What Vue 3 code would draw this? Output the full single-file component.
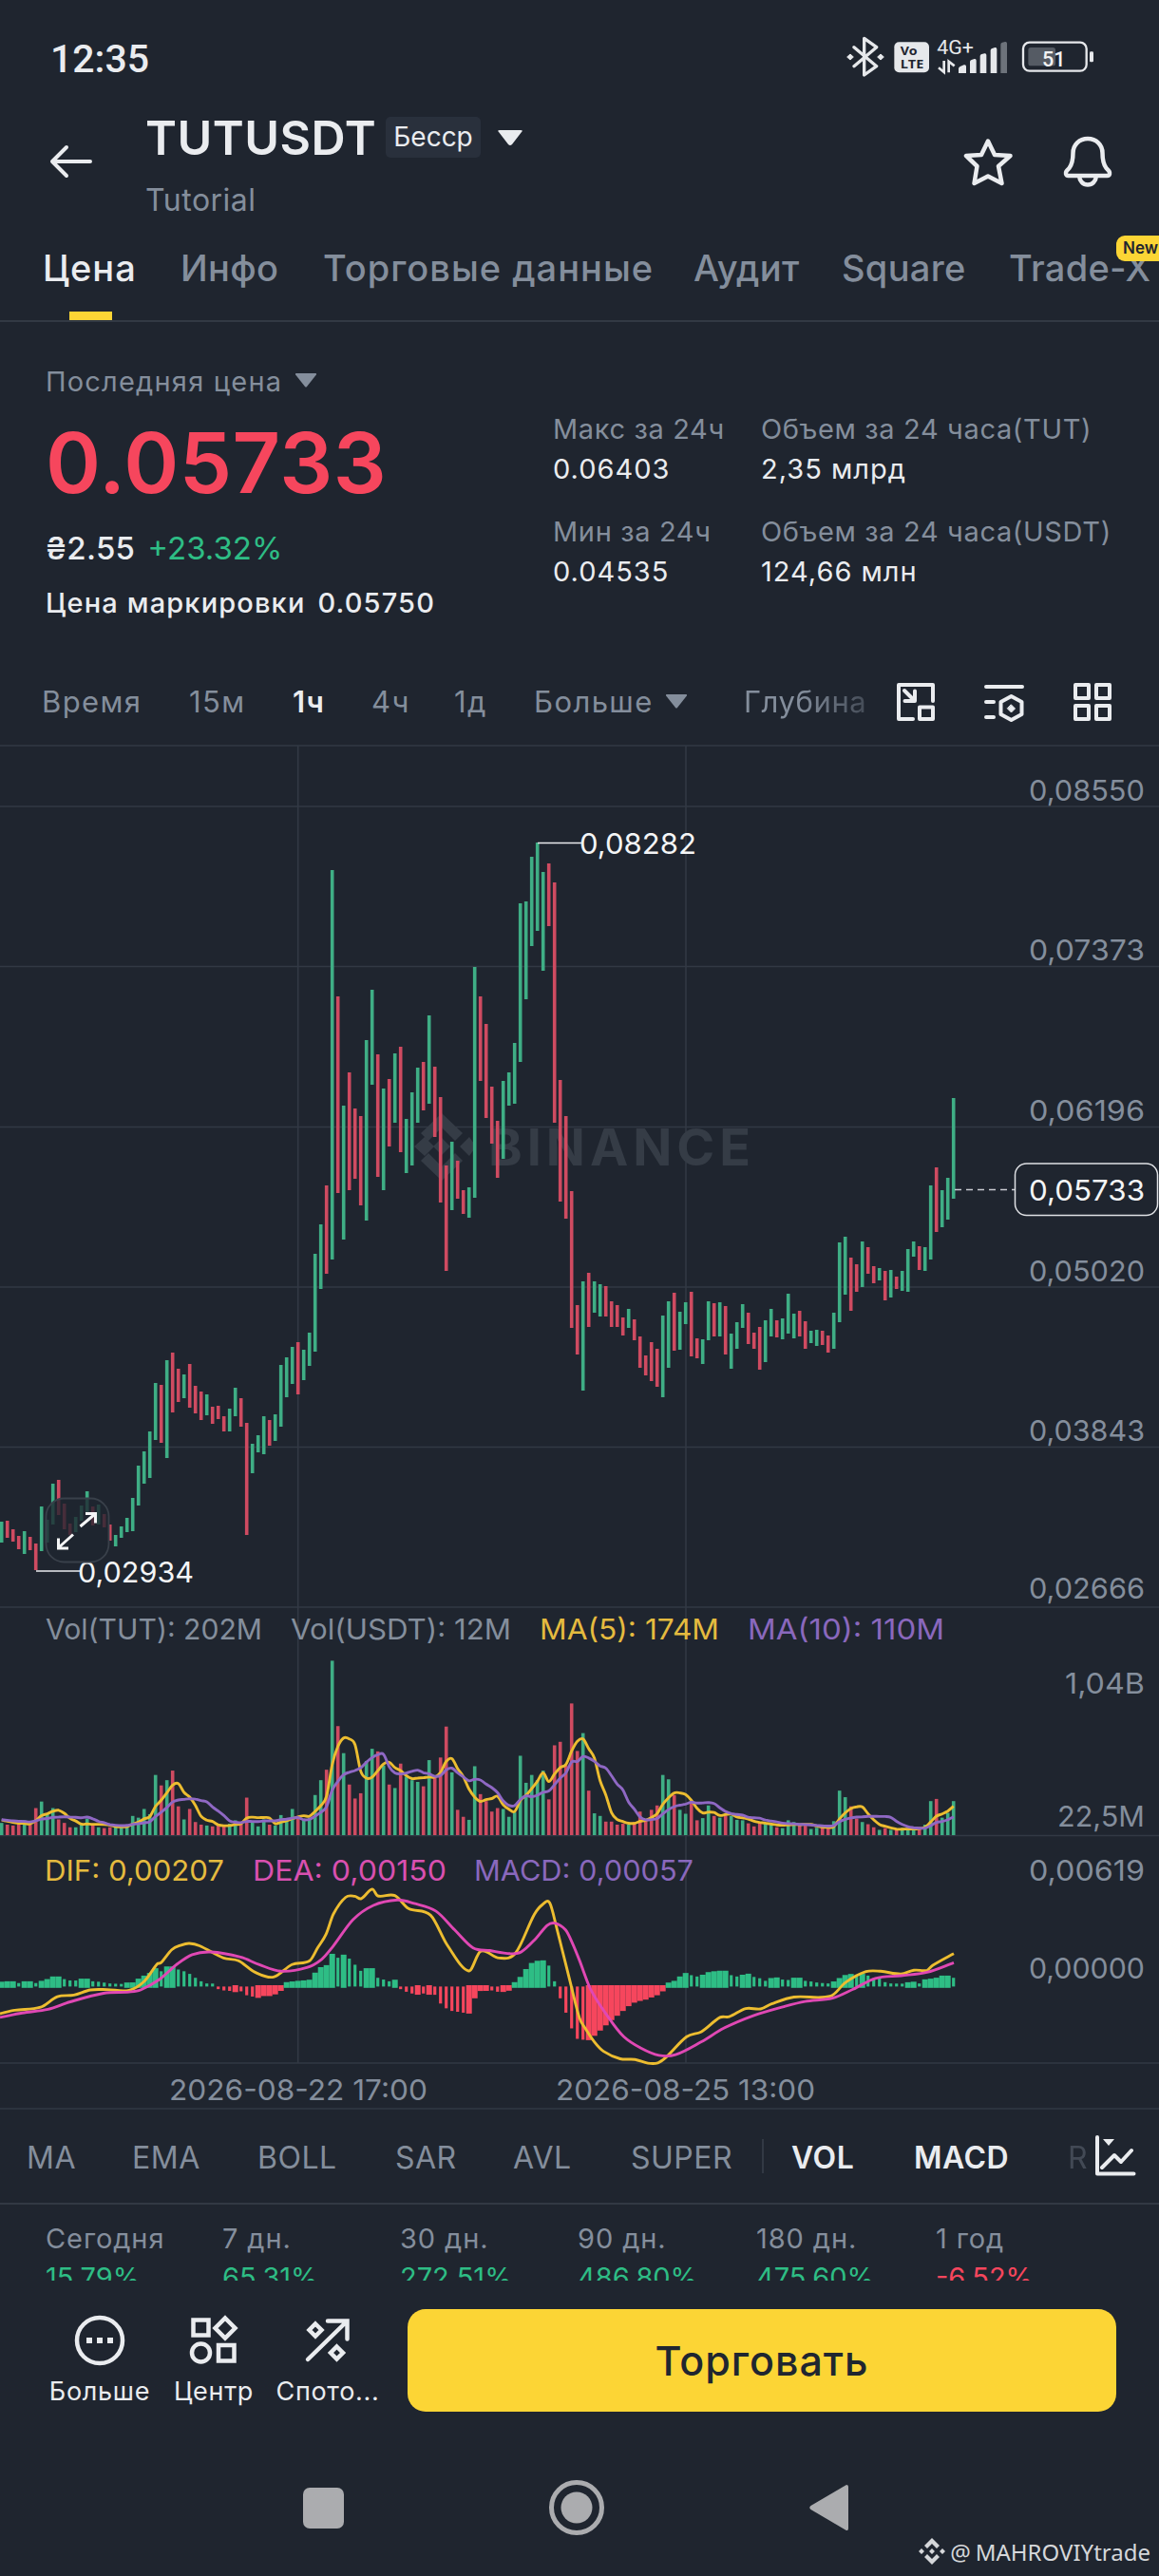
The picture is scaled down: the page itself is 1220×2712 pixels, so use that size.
<script setup>
import { ref, computed } from 'vue'

const tabs = ref(['Цена', 'Инфо', 'Торговые данные', 'Аудит', 'Square', 'Trade-X'])
const activeTab = ref('Цена')

const intervals = ref(['Время', '15м', '1ч', '4ч', '1д'])
const activeInterval = ref('1ч')

const stats = ref([
  { label: 'Макс за 24ч', value: '0.06403' },
  { label: 'Объем за 24 часа(TUT)', value: '2,35 млрд' },
  { label: 'Мин за 24ч', value: '0.04535' },
  { label: 'Объем за 24 часа(USDT)', value: '124,66 млн' },
])

const indicators = ref(['MA', 'EMA', 'BOLL', 'SAR', 'AVL', 'SUPER'])

const periods = ref([
  { label: 'Сегодня', value: '15.79%' },
  { label: '7 дн.', value: '65.31%' },
  { label: '30 дн.', value: '272.51%' },
  { label: '90 дн.', value: '486.80%' },
  { label: '180 дн.', value: '475.60%' },
  { label: '1 год', value: '-6.52%' },
])

// Chart geometry
const STEP = 6
const VOL_BASE = 1932
const MACD_ZERO = 2091.4
const SCALE = 0.918
const xAt = (i) => 1.7 + i * STEP

const gridRows = [849, 1017.5, 1186.5, 1355, 1523.5, 1692, 1932.5, 2172]
const gridCols = [313.7, 722]

const axis = [
  { y: 842.5, text: '0,08550', w: 120 },
  { y: 1011, text: '0,07373', w: 120 },
  { y: 1179.5, text: '0,06196', w: 120 },
  { y: 1348.5, text: '0,05020', w: 120 },
  { y: 1517, text: '0,03843', w: 120 },
  { y: 1683, text: '0,02666', w: 120 },
  { y: 1782.5, text: '1,04B', w: 82 },
  { y: 1923, text: '22,5M', w: 90 },
  { y: 1980, text: '0,00619', w: 120 },
  { y: 2082.5, text: '0,00000', w: 120 },
]

const legends = [
  { x: 48, y: 1725.5, w: 228, text: 'Vol(TUT): 202M', cls: 'grey' },
  { x: 306, y: 1725.5, w: 232, text: 'Vol(USDT): 12M', cls: 'grey' },
  { x: 568, y: 1725.5, w: 189, text: 'MA(5): 174M', cls: 'gold' },
  { x: 787, y: 1725.5, w: 207, text: 'MA(10): 110M', cls: 'purple' },
  { x: 47, y: 1980, w: 189, text: 'DIF: 0,00207', cls: 'gold' },
  { x: 266, y: 1980, w: 204, text: 'DEA: 0,00150', cls: 'pink' },
  { x: 499, y: 1980, w: 231, text: 'MACD: 0,00057', cls: 'purple' },
  { x: 178, y: 2211, w: 272, text: '2026-08-22 17:00', cls: 'grey' },
  { x: 585, y: 2211, w: 273, text: '2026-08-25 13:00', cls: 'grey' },
]

// [top, bottom, up]
const candles = [
  [1602, 1624, 1], [1601, 1619, 0], [1610, 1623, 0], [1617, 1631, 0], [1612, 1636, 1], [1618, 1632, 0],
  [1625, 1653, 0], [1586, 1633, 1], [1600, 1624, 1], [1562, 1605, 1], [1558, 1595, 0], [1583, 1610, 0],
  [1604, 1616, 0], [1597, 1613, 1], [1585, 1601, 1], [1570, 1595, 1], [1586, 1606, 0], [1584, 1605, 1],
  [1594, 1608, 0], [1605, 1622, 0], [1616, 1628, 1], [1607, 1619, 1], [1598, 1613, 1], [1577, 1612, 1],
  [1543, 1585, 1], [1528, 1562, 1], [1507, 1556, 1], [1456, 1516, 1], [1458, 1519, 0], [1432, 1535, 1],
  [1424, 1487, 0], [1441, 1476, 0], [1447, 1472, 1], [1436, 1482, 0], [1459, 1488, 0], [1465, 1495, 0],
  [1468, 1490, 1], [1481, 1499, 0], [1480, 1494, 0], [1491, 1507, 0], [1483, 1507, 1], [1461, 1491, 1],
  [1472, 1502, 0], [1498, 1616, 0], [1520, 1551, 1], [1511, 1529, 1], [1491, 1531, 1], [1495, 1522, 0],
  [1489, 1517, 1], [1437, 1502, 1], [1429, 1471, 1], [1418, 1457, 1], [1413, 1468, 0], [1421, 1453, 1],
  [1403, 1438, 1], [1320, 1423, 1], [1289, 1357, 1], [1248, 1341, 0], [916, 1326, 1], [1049, 1256, 0],
  [1164, 1305, 1], [1129, 1253, 0], [1167, 1241, 0], [1175, 1269, 0], [1095, 1285, 1], [1042, 1142, 1],
  [1110, 1239, 0], [1146, 1253, 1], [1136, 1207, 0], [1109, 1182, 1], [1102, 1213, 0], [1178, 1235, 1],
  [1150, 1227, 1], [1124, 1182, 1], [1118, 1169, 0], [1069, 1162, 1], [1123, 1197, 0], [1155, 1266, 0],
  [1227, 1338, 0], [1202, 1274, 1], [1222, 1262, 0], [1253, 1278, 0], [1250, 1282, 1], [1018, 1261, 1],
  [1049, 1138, 0], [1078, 1177, 0], [1144, 1204, 0], [1180, 1240, 0], [1138, 1220, 1], [1129, 1164, 1],
  [1098, 1162, 1], [951, 1118, 1], [949, 1052, 1], [902, 996, 1], [887, 980, 1], [918, 1022, 1],
  [909, 975, 0], [929, 1182, 0], [1137, 1265, 0], [1175, 1283, 0], [1254, 1398, 0], [1374, 1426, 0],
  [1349, 1464, 1], [1340, 1397, 0], [1349, 1382, 1], [1352, 1386, 1], [1354, 1386, 0], [1370, 1397, 0],
  [1374, 1397, 0], [1387, 1406, 0], [1378, 1398, 1], [1389, 1411, 0], [1407, 1440, 0], [1427, 1448, 0],
  [1413, 1454, 0], [1420, 1460, 0], [1385, 1471, 1], [1370, 1440, 1], [1361, 1422, 0], [1381, 1421, 1],
  [1371, 1394, 1], [1360, 1428, 0], [1409, 1430, 0], [1410, 1436, 1], [1370, 1411, 1], [1372, 1407, 0],
  [1371, 1407, 1], [1375, 1426, 0], [1404, 1441, 1], [1392, 1420, 1], [1373, 1398, 1], [1382, 1415, 0],
  [1403, 1420, 0], [1397, 1442, 0], [1390, 1434, 1], [1378, 1407, 1], [1390, 1408, 0], [1388, 1410, 1],
  [1362, 1404, 1], [1383, 1409, 1], [1380, 1407, 0], [1391, 1420, 0], [1401, 1414, 1], [1400, 1417, 1],
  [1401, 1416, 0], [1406, 1424, 0], [1382, 1420, 1], [1308, 1392, 1], [1302, 1363, 1], [1324, 1380, 0],
  [1331, 1360, 0], [1307, 1355, 1], [1313, 1341, 0], [1333, 1351, 0], [1335, 1348, 1], [1338, 1369, 0],
  [1337, 1366, 1], [1344, 1357, 0], [1338, 1359, 1], [1315, 1360, 1], [1307, 1323, 1], [1312, 1337, 0],
  [1313, 1338, 1], [1248, 1326, 1], [1229, 1297, 0], [1253, 1292, 1], [1240, 1284, 1], [1156, 1262, 1],
]

const volumes = [
  14, 12, 11, 13, 17, 12, 31, 38.5, 24, 31, 18, 14, 9, 9, 13, 19, 12, 9, 8, 9, 11, 10, 11, 22,
  20, 30, 24, 69, 57, 63, 74, 33, 18, 30, 15, 12, 11, 10, 11, 10, 13, 17, 15, 43, 15, 10, 18, 12,
  11, 23, 18, 30, 22, 18, 20, 46, 63, 75, 200, 125, 94, 58, 42, 48, 85, 99, 96, 80, 58, 54, 82, 67,
  63, 61, 56, 86, 67, 89, 124.5, 72, 29, 21, 17.5, 79, 47, 39, 27, 31, 30, 21, 26, 91, 60, 69, 63, 74,
  41, 103, 107, 80, 151, 96.5, 117, 51, 25, 22, 15.5, 15.5, 12, 13, 12, 15, 27, 18, 29, 34, 69, 64, 46, 29,
  24.5, 37, 17, 19.5, 34, 22, 20, 22.5, 22, 17.5, 17, 13.5, 10, 15, 13, 12, 9, 8, 17, 15, 11, 11, 7, 8.5,
  8.5, 9, 16, 51, 43.5, 33, 19, 15, 12.5, 9, 6, 8, 6, 5.5, 8, 8, 7.5, 9, 12, 39, 41.5, 20, 25.5, 39,
]

const macd = [
  4, 4.5, 4.5, 4, 4.5, 4.5, 4, 5, 7, 10, 10, 8.5, 7, 6.9, 7.5, 7.5, 6, 5.5, 4.5, 3.5, 3.2, 3, 3.1, 3.2,
  7.5, 11, 14, 19.5, 17.5, 21.5, 21.5, 19.5, 17.5, 14.5, 10, 6, 3.5, 3.4, -3, -4.5, -5, -4.9, -5.5, -10, -11.5, -11.5, -9.4, -9.4,
  -7.5, -3.5, 3.5, 4.3, 5, 5.5, 6.3, 14.4, 20.7, 23, 36, 33, 35, 32, 25, 18, 19.5, 19.5, 10, 8, 6, 6.3, -3, -6,
  -8, -7.9, -8, -7.9, -9.5, -19.5, -25, -28, -29, -30, -29.5, -12, -3.6, -3.5, -4.5, -6, -4.7, -3.3, 3.5, 9.5, 18.5, 25.5, 28, 28.5,
  24, 6, -13.5, -30, -48, -60, -61, -60, -55, -49, -43, -37, -32, -26.5, -21, -17, -15, -13.5, -11, -8.5, -4, 3, 5, 10,
  14, 13, 11.5, 12, 15, 16, 16.6, 16.6, 13, 11.5, 12, 13.2, 11, 9.5, 6.5, 8.2, 8.9, 8, 7.5, 8.6, 8.6, 6.5, 5.8, 4.6,
  4, 3.5, 4.3, 8.2, 11.7, 12.9, 11.5, 13, 12.5, 9.5, 9.4, 5, 3.5, 3.4, 3.3, 3.4, 4, 3.5, 6.7, 7.5, 8.6, 11, 11, 10,
]

// [x, value] knots of the MACD lines
const dif = [
  [0, -80], [15.6, -70], [42.8, -61], [60.3, -30], [77.8, -25], [95.3, -10], [112.8, -9], [136, -11],
  [151.8, 15], [165.4, 66], [169.3, 70], [181, 109], [190.7, 122], [199.2, 127], [210, 120], [235.4, 84],
  [251, 76], [268.5, 42], [288, 28], [307.4, 65], [326, 76], [334.6, 115], [343.2, 154], [351, 214],
  [363.8, 263], [373.5, 266], [380.2, 259], [391.8, 287], [397.7, 267], [415.6, 268], [430, 230], [453.3, 210],
  [470.8, 122], [493.4, 46], [505.8, 104], [525.3, 84], [542.8, 99], [562.3, 212], [571.2, 242], [578.6, 247],
  [585.6, 177], [601.2, 2], [610, -93], [615.8, -122], [625.6, -163], [635.3, -191], [652.8, -213],
  [668.4, -215], [682, -226], [692.5, -225], [701.4, -208], [722.8, -148], [738.4, -133], [757.9, -91],
  [767.6, -89], [785, -65], [800.7, -66], [812.3, -51], [835.7, -31], [874.6, -28], [890, 12], [911.6, 44],
  [927, 45], [948.5, 37], [962, 48], [975.8, 48], [981.6, 62], [1004, 97],
]
const dea = [
  [0, -91], [23.3, -78], [50.6, -67], [74, -45], [109, -20], [136, -16], [148, -10], [167.3, 20],
  [186.8, 67], [202.3, 94], [221.8, 102], [253, 87], [272.4, 65], [295.7, 45], [323, 56], [338.5, 80],
  [350.2, 117], [371.6, 197], [393, 239], [418.3, 255], [435.8, 245], [459, 222], [478.6, 167], [498, 114],
  [515.6, 106], [537, 97], [548.6, 102], [564.2, 142], [575.9, 180], [583.7, 187], [595.3, 167], [603, 125],
  [610, 77], [621.7, -8], [641, -93], [656.7, -148], [674.2, -181], [693.7, -203], [711.2, -201],
  [738.4, -163], [761.8, -123], [792.9, -86], [824, -60], [847.4, -44], [876.5, -34], [898, -8],
  [921.3, 24], [948.5, 32], [975.8, 42], [1004, 70],
]

const smooth = (pts) => {
  let d = `M${pts[0][0]} ${pts[0][1].toFixed(1)}`
  for (let i = 0; i < pts.length - 1; i++) {
    const p0 = pts[i - 1] || pts[i]
    const p1 = pts[i]
    const p2 = pts[i + 1]
    const p3 = pts[i + 2] || p2
    const k = (p2[0] - p1[0]) / 3
    const s1 = p2[0] === p0[0] ? 0 : (p2[1] - p0[1]) / (p2[0] - p0[0])
    const s2 = p3[0] === p1[0] ? 0 : (p3[1] - p1[1]) / (p3[0] - p1[0])
    d += `C${(p1[0] + k).toFixed(1)} ${(p1[1] + s1 * k).toFixed(1)} ${(p2[0] - k).toFixed(1)} ${(p2[1] - s2 * k).toFixed(1)} ${p2[0].toFixed(1)} ${p2[1].toFixed(1)}`
  }
  return d
}

const average = (n) => {
  const pts = volumes.map((_, i) => {
    let sum = 0
    for (let j = i - n + 1; j <= i; j++) sum += j < 0 ? 18 : volumes[j]
    return [xAt(i), VOL_BASE - (sum / n) * SCALE]
  })
  return smooth(pts)
}

const ma5 = computed(() => average(5))
const ma10 = computed(() => average(10))
const macdLine = (pts) => smooth(pts.map(([x, v]) => [x, MACD_ZERO - v / 2.8]))
const difPath = computed(() => macdLine(dif))
const deaPath = computed(() => macdLine(dea))

// growing bars are drawn full width, shrinking ones are narrow
const macdBars = computed(() =>
  macd.map((m, i) => {
    const wide = i === 0 || m >= macd[i - 1]
    const pad = wide ? 1.4 : 0
    const h = Math.abs(m) * SCALE
    return {
      x: xAt(i) - (wide ? 3 : 1.6),
      y: (m > 0 ? MACD_ZERO - h : MACD_ZERO) - pad,
      w: wide ? 6 : 3.2,
      h: h + pad * 2,
      up: m > 0,
    }
  })
)
</script>

<template>
  <div class="screen">
    <div class="status-bar">
      <span class="clock">12:35</span>
      <svg class="status-icons" width="264" height="44" viewBox="60 20 792 132">
        <g fill="none" stroke="#e6e8eb" stroke-width="10" stroke-linejoin="round" stroke-linecap="round">
          <path d="M90 58 L161 118 L122 146 V30 L161 58 L90 118" />
        </g>
        <path d="M68 89l10-9 10 9-10 9zM164 89l10-9 10 9-10 9z" fill="#e6e8eb" stroke="#e6e8eb" stroke-width="3" stroke-linejoin="round" />
        <rect x="217" y="42" width="110" height="96" rx="15" fill="#e6e8eb" />
        <text x="236" y="84" class="volte" textLength="54" lengthAdjust="spacingAndGlyphs">Vo</text>
        <text x="236" y="126" class="volte" textLength="74" lengthAdjust="spacingAndGlyphs">LTE</text>
        <text x="352" y="79" class="net" textLength="116" lengthAdjust="spacingAndGlyphs">4G+</text>
        <path d="M374 101v36l-17-14M389 138v-35l18 14" fill="none" stroke="#e6e8eb" stroke-width="8" />
        <path d="M420 140v-14q0-5 5-7l12-5q7-2 7 5v21zM456 140v-36q0-5 5-6l9-3q6-1 6 5v40zM488 140v-54q0-5 5-6l9-2q6-1 6 5v57zM521 140v-72q0-5 5-6l9-3q6-1 6 5v76z" fill="#e6e8eb" />
        <path d="M553 140v-91q0-5 5-6l9-2q6-1 6 5v94z" fill="#6d737b" />
        <rect x="624" y="43" width="200" height="90" rx="20" fill="none" stroke="#e6e8eb" stroke-width="7" />
        <rect x="640" y="59" width="86" height="58" rx="8" fill="#555b64" />
        <rect x="834" y="72" width="12" height="33" rx="4" fill="#e6e8eb" />
        <text x="684" y="119" class="charge" textLength="74" lengthAdjust="spacingAndGlyphs">51</text>
      </svg>
    </div>

    <header class="header">
      <svg class="back" width="48" height="40" viewBox="0 0 48 40">
        <path d="M45 20H6M20 5L5 20l15 15" />
      </svg>
      <div class="pair">
        <div class="pair-title">
          <h1>TUTUSDT</h1>
          <span class="chip">Бесср</span>
          <svg width="28" height="18" viewBox="0 0 28 18"><path d="M3 1h22q3 0 1 2L16 16q-2 2-4 0L2 3Q0 1 3 1z" fill="#eaecef" /></svg>
        </div>
        <p>Tutorial</p>
      </div>
      <svg class="line-icon" width="52" height="52" viewBox="0 0 52 52">
        <path d="M26 4.500l7 14.500 16.500 1-12.500 11 3.500 18-14.500-7.500-14.500 7.500 3-18L3 20l16-1z" />
      </svg>
      <svg class="line-icon bell" width="52" height="56" viewBox="0 0 52 56">
        <path d="M26 4c-9 0-15.500 6.500-15.500 15 0 8-1 12-4 16-3 3-4 4-3.500 6 .3 1.300 1 2 2.500 2h41c1.500 0 2.200-.7 2.500-2 .5-2-.5-3-3.500-6-3-4-4-8-4-16C41.500 10.500 35 4 26 4z" />
        <path d="M17 43c.5 6 4 9.500 9 9.500s8.500-3.500 9-9.500" />
      </svg>
    </header>

    <nav class="tabs">
      <a v-for="tab in tabs" :key="tab" :class="{ active: tab === activeTab }">
        <span>{{ tab }}</span>
        <i v-if="tab === 'Trade-X'" class="new">New</i>
      </a>
    </nav>

    <section class="summary">
      <div class="price">
        <div class="price-label">
          Последняя цена
          <svg width="22" height="15" viewBox="0 0 22 15"><path d="M1 0h20q2 0 .500 2L12 14q-1 1-2 0L.500 2Q-1 0 1 0z" fill="#848e9c" /></svg>
        </div>
        <div class="last">0.05733</div>
        <div class="fiat"><b>₴2.55</b><span>+23.32%</span></div>
        <div class="mark"><span>Цена маркировки</span><span>0.05750</span></div>
      </div>
      <dl class="stats">
        <div v-for="s in stats" :key="s.label">
          <dt>{{ s.label }}</dt>
          <dd>{{ s.value }}</dd>
        </div>
      </dl>
    </section>

    <div class="intervals">
      <div class="interval-list">
        <span v-for="item in intervals" :key="item" :class="{ active: item === activeInterval }">{{ item }}</span>
        <span class="more">
          Больше
          <svg width="22" height="15" viewBox="0 0 22 15"><path d="M1 0h20q2 0 .500 2L12 14q-1 1-2 0L.500 2Q-1 0 1 0z" fill="#848e9c" /></svg>
        </span>
        <span class="depth">Глубина</span>
      </div>
      <svg class="tool" width="42" height="42" viewBox="0 0 42 42">
        <path d="M18 39H3V3h36v17" />
        <path d="M9 9l10 10M20 9.500V20H9.500" />
        <rect x="25" y="26.500" width="14" height="12.500" />
      </svg>
      <svg class="tool" width="44" height="42" viewBox="0 0 44 42">
        <path d="M3 5h38M3 21h8M3 37h8" />
        <path d="M29.500 15L40.500 21v13l-11 6-11-6V21z" />
        <path d="M29.500 24l4 4-4 4-4-4z" fill="#eaecef" stroke-width="1" />
      </svg>
      <svg class="tool" width="42" height="42" viewBox="0 0 42 42">
        <rect x="3" y="3" width="14" height="14" />
        <rect x="25" y="3" width="14" height="14" />
        <rect x="3" y="25" width="14" height="14" />
        <rect x="25" y="25" width="14" height="14" />
      </svg>
    </div>

    <svg class="chart" width="1220" height="1437" viewBox="0 784 1220 1437">
      <g class="grid">
        <path d="M0 785H1220M0 2220H1220" />
        <path v-for="y in gridRows" :key="y" :d="`M0 ${y}H1220`" />
        <path v-for="x in gridCols" :key="x" :d="`M${x} 785V2172`" />
      </g>

      <g class="watermark">
        <path d="M465 1172l22 21-8 8-14-14-14 14-8-8zM465 1243l22-21-8-8-14 14-14-14-8 8zM436 1207l11-10 10 10-10 10zM494 1197l-10 10 10 10 7-10zM465 1198l9 9-9 9-9-9z" />
        <text x="514" y="1227" textLength="276" lengthAdjust="spacing">BINANCE</text>
      </g>

      <rect
        v-for="([top, bottom, up], i) in candles"
        :key="'c' + i"
        :class="up ? 'bar-up' : 'bar-down'"
        :x="xAt(i) - 1.8"
        :y="top"
        width="3.6"
        :height="bottom - top"
      />

      <path d="M566 887.500H612M38 1654H84" stroke="#eaecef" stroke-width="1.6" />
      <text class="mark-label" x="610" y="899" textLength="123" lengthAdjust="spacingAndGlyphs">0,08282</text>
      <text class="mark-label" x="82" y="1666" textLength="122" lengthAdjust="spacingAndGlyphs">0,02934</text>

      <rect x="48.500" y="1577.500" width="66" height="67" rx="19" fill="#1f252f" fill-opacity="0.78" stroke="#39404a" stroke-width="1.8" />
      <path d="M84.500 1607L100 1594M90 1593.500h10.500v10M77 1615.500L62 1629M61.500 1619.500v10.500h10.500" fill="none" stroke="#f4f5f6" stroke-width="3" />

      <path d="M1005 1252.500H1068" stroke="#c9ccd1" stroke-width="1.6" stroke-dasharray="7 5" />
      <rect x="1068.500" y="1225" width="150" height="54.500" rx="12" fill="#1f252f" stroke="#dfe1e5" stroke-width="1.5" />
      <text class="mark-label" x="1205" y="1264" text-anchor="end" textLength="122" lengthAdjust="spacingAndGlyphs">0,05733</text>

      <text v-for="a in axis" :key="a.y" class="grey" x="1205" :y="a.y" text-anchor="end" :textLength="a.w + 2" lengthAdjust="spacingAndGlyphs">{{ a.text }}</text>

      <rect
        v-for="(v, i) in volumes"
        :key="'v' + i"
        :class="candles[i][2] ? 'bar-up' : 'bar-down'"
        :x="xAt(i) - 1.8"
        :y="VOL_BASE - v * SCALE"
        width="3.6"
        :height="v * SCALE"
      />
      <path class="line gold-line" :d="ma5" />
      <path class="line purple-line" :d="ma10" />

      <rect
        v-for="(b, i) in macdBars"
        :key="'m' + i"
        :fill="b.up ? '#2ebd85' : '#f6465d'"
        :x="b.x"
        :y="b.y"
        :width="b.w"
        :height="b.h"
      />
      <path class="line gold-line" :d="difPath" />
      <path class="line pink-line" :d="deaPath" />

      <text v-for="l in legends" :key="l.text" :class="l.cls" :x="l.x" :y="l.y" :textLength="l.w" lengthAdjust="spacingAndGlyphs">{{ l.text }}</text>
    </svg>

    <div class="indicators">
      <span v-for="name in indicators" :key="name">{{ name }}</span>
      <span class="on vol">VOL</span>
      <span class="on">MACD</span>
      <span class="faded">R</span>
      <svg width="44" height="44" viewBox="0 0 44 44">
        <path d="M3 2v38.500h38.500M8 34l13-13 7 7 11-12" fill="none" stroke="#eaecef" stroke-width="4" stroke-linecap="round" stroke-linejoin="round" />
        <path d="M9 4h12l-6 7z" fill="#eaecef" />
      </svg>
    </div>

    <div class="periods">
      <div v-for="p in periods" :key="p.label">
        <span>{{ p.label }}</span>
        <em :class="{ down: p.value.startsWith('-') }">{{ p.value }}</em>
      </div>
    </div>

    <footer class="actions">
      <div class="action">
        <svg width="54" height="54" viewBox="0 0 54 54">
          <circle cx="27" cy="27" r="24" />
          <path d="M13 24h6v6h-6zM24 24h6v6h-6zM35 24h6v6h-6z" fill="#eaecef" stroke="none" />
        </svg>
        <span>Больше</span>
      </div>
      <div class="action">
        <svg width="54" height="54" viewBox="0 0 54 54">
          <rect x="5.500" y="5.500" width="16" height="16" />
          <path d="M39 3.500L49.500 14 39 24.500 28.500 14z" />
          <circle cx="13.500" cy="40" r="9.500" />
          <rect x="32" y="32" width="16.500" height="16.500" />
        </svg>
        <span>Центр</span>
      </div>
      <div class="action">
        <svg width="54" height="54" viewBox="0 0 54 54">
          <path d="M6 47L47 7M27 6.500h20.500v19" stroke-linecap="round" />
          <path d="M14 9.500l6.500 6.500-6.500 6.500L7.500 16zM36.500 33.500l6.500 6.500-6.500 6.500-6.500-6.500z" />
        </svg>
        <span>Спото...</span>
      </div>
      <button class="trade">Торговать</button>
    </footer>

    <div class="system-nav">
      <svg width="43" height="43"><rect width="43" height="43" rx="7" fill="#abacaf" /></svg>
      <svg width="60" height="60">
        <circle cx="30" cy="30" r="26.500" fill="none" stroke="#abacaf" stroke-width="5" />
        <circle cx="30" cy="30" r="16.500" fill="#abacaf" />
      </svg>
      <svg width="41" height="50"><path d="M39 1q2 0 2 2v44q0 3-3 1.500L1.500 27q-2.500-2 0-4z" fill="#abacaf" /></svg>
    </div>

    <div class="credit">
      <svg width="28" height="28" viewBox="0 0 28 28">
        <path d="M14 0l8 8-3 3-5-5-5 5-3-3zM14 28l8-8-3-3-5 5-5-5-3 3zM0 14l3-3 3 3-3 3zM22 14l3-3 3 3-3 3zM14 11l3 3-3 3-3-3z" fill="#d5d7da" />
      </svg>
      <span>@</span>
      <span>MAHROVIYtrade</span>
    </div>
  </div>
</template>

<style>
body {
  background: #1f252f;
}
</style>

<style scoped>
.screen {
  position: relative;
  width: 1220px;
  height: 2712px;
  overflow: hidden;
  background: #1f252f;
  color: #eaecef;
  font-family: Inter, "Noto Sans", sans-serif;
  font-size: 30px;
}

svg {
  display: block;
  flex: none;
}

.status-bar {
  display: flex;
  justify-content: space-between;
  height: 100px;
  padding: 0 67px 0 53px;
  box-sizing: border-box;
}

.clock {
  font-family: Roboto, sans-serif;
  font-size: 41px;
  font-weight: 500;
  line-height: 124px;
}

.status-icons {
  margin-top: 37px;
}

.volte {
  font: 700 37px "Open Sans", sans-serif;
  fill: #1f252f;
}

.net {
  font: 400 60px Roboto, sans-serif;
  fill: #e6e8eb;
}

.charge {
  font: 500 68px Roboto, sans-serif;
  fill: #f1f2f3;
}

.header {
  display: flex;
  align-items: center;
  height: 140px;
  padding: 0 49px 0 50px;
}

.back path {
  fill: none;
  stroke: #eaecef;
  stroke-width: 4;
  stroke-linecap: round;
  stroke-linejoin: round;
}

.pair {
  flex: 1;
  align-self: stretch;
  padding: 14px 0 0 55px;
}

.pair-title {
  display: flex;
  align-items: center;
  height: 61px;
}

.pair h1 {
  width: 253px;
  margin: 0;
  font-size: 50px;
  font-weight: 600;
  letter-spacing: 0.5px;
}

.chip {
  width: 100px;
  height: 43px;
  margin-right: 17px;
  border-radius: 5px;
  background: #29303c;
  font-size: 28px;
  line-height: 43px;
  text-align: center;
}

.pair p {
  margin: 16px 0 0;
  font-size: 32px;
  letter-spacing: 0.5px;
  line-height: 40px;
  color: #848e9c;
}

.line-icon {
  fill: none;
  stroke: #eaecef;
  stroke-width: 4.5;
  stroke-linejoin: round;
}

.bell {
  margin-left: 53px;
}

.tabs {
  display: grid;
  grid-template-columns: 145px 150px 390px 156px 176px 160px;
  height: 97px;
  padding-left: 45px;
  border-bottom: 2px solid #323944;
  font-size: 38px;
  font-weight: 500;
  line-height: 85px;
  letter-spacing: 0.3px;
  color: #848e9c;
  white-space: nowrap;
}

.tabs a {
  position: relative;
}

.tabs a:nth-child(odd):not(:nth-child(5)) {
  letter-spacing: 1px;
}

.tabs .active {
  color: #eaecef;
}

.tabs .active::after {
  content: "";
  position: absolute;
  left: 28px;
  bottom: 0;
  width: 45px;
  height: 9px;
  background: #fcd535;
}

.new {
  position: absolute;
  left: 113px;
  top: 8px;
  width: 54px;
  height: 27px;
  padding-left: 7px;
  border-radius: 9px;
  background: #fcd535;
  color: #1f252f;
  font-size: 17px;
  font-style: normal;
  font-weight: 600;
  line-height: 27px;
  letter-spacing: 0;
}

.summary {
  display: flex;
  height: 354px;
  padding-left: 48px;
}

.price {
  width: 534px;
  padding-top: 43px;
  line-height: 40px;
}

.price-label {
  display: flex;
  gap: 14px;
  color: #848e9c;
  font-size: 29px;
  letter-spacing: 1.2px;
}

.price-label svg {
  margin-top: 11px;
}

.last {
  margin-top: 20px;
  color: #f6465d;
  font-size: 88px;
  font-weight: 600;
  letter-spacing: 0.5px;
  line-height: 90px;
}

.fiat {
  display: flex;
  gap: 13px;
  margin-top: 25px;
  font-size: 33px;
}

.fiat b {
  font-weight: 500;
  letter-spacing: 0.3px;
}

.fiat span {
  color: #2ebd85;
}

.mark {
  display: flex;
  gap: 13px;
  margin-top: 18px;
  font-size: 29px;
  font-weight: 500;
  letter-spacing: 1.15px;
}

.stats {
  display: grid;
  grid-template-columns: 219px 400px;
  align-content: start;
  row-gap: 24px;
  margin: 0;
  padding-top: 92px;
  font-size: 29px;
  line-height: 42px;
}

.stats dt {
  color: #848e9c;
  letter-spacing: 0.65px;
}

.stats dd {
  margin: 0;
  letter-spacing: 1px;
}

.intervals {
  display: flex;
  align-items: center;
  height: 91px;
}

.intervals .tool {
  margin-right: 50px;
  fill: none;
  stroke: #eaecef;
  stroke-width: 4;
  stroke-linecap: round;
  stroke-linejoin: round;
}

.interval-list {
  display: grid;
  grid-template-columns: 155px 109px 83px 87px 84px 221px 140px;
  width: 898px;
  padding-left: 44px;
  box-sizing: border-box;
  color: #848e9c;
  font-size: 31px;
  letter-spacing: 1.4px;
  line-height: 91px;
  white-space: nowrap;
}

.interval-list .active {
  color: #eaecef;
  font-weight: 600;
}

.more {
  display: flex;
  align-items: center;
  gap: 13px;
}

.interval-list .depth {
  letter-spacing: 0.6px;
  mask-image: linear-gradient(90deg, #000 60px, rgba(0, 0, 0, 0.3) 135px);
}

.interval-list + .tool {
  margin-left: 45px;
}

.grid path {
  stroke: #323944;
  stroke-width: 1.6;
}

.watermark {
  fill: #353c46;
}

.watermark text {
  font-size: 54px;
  font-weight: 700;
}

.bar-up {
  fill: #3fae85;
}

.bar-down {
  fill: #cf4b61;
}

.mark-label {
  fill: #f4f5f6;
}

.grey {
  fill: #848e9c;
}

.gold {
  fill: #e5bb3f;
}

.pink {
  fill: #d950b0;
}

.purple {
  fill: #8a68bd;
}

.line {
  fill: none;
  stroke-width: 2.9;
  stroke-linejoin: round;
}

.gold-line {
  stroke: #edbd30;
}

.purple-line {
  stroke: #8f68c4;
}

.pink-line {
  stroke: #e048b4;
}

.indicators {
  display: grid;
  grid-template-columns: 111px 132px 145px 124px 124px 169px 129px 162px 28px 44px;
  align-items: center;
  height: 98px;
  padding-left: 28px;
  border-bottom: 2px solid #323944;
  color: #848e9c;
  font-size: 32px;
  line-height: 40px;
  letter-spacing: 0.5px;
}

.indicators span {
  padding-top: 3px;
}

.indicators .on {
  color: #eaecef;
  font-weight: 600;
}

.vol {
  position: relative;
}

.vol::before {
  content: "";
  position: absolute;
  left: -31px;
  top: 3px;
  width: 2px;
  height: 36px;
  background: #323944;
}

.faded {
  opacity: 0.35;
}

.periods {
  display: grid;
  grid-template-columns: 186px 187px 187px 188px 189px 150px;
  height: 64px;
  padding: 16px 0 0 48px;
  overflow: hidden;
  font-size: 29px;
  line-height: 40px;
}

.periods span {
  display: block;
  color: #848e9c;
  letter-spacing: 0.9px;
}

.periods em {
  display: block;
  margin-top: 1px;
  color: #2ebd85;
  font-style: normal;
}

.periods .down {
  color: #f6465d;
}

.actions {
  display: flex;
  height: 108px;
  padding: 30px 45px 0 45px;
}

.action {
  display: flex;
  flex-direction: column;
  align-items: center;
  width: 120px;
  padding-top: 6px;
}

.action svg {
  fill: none;
  stroke: #eaecef;
  stroke-width: 4.5;
}

.action span {
  margin-top: 12px;
  font-size: 27px;
  line-height: 30px;
  letter-spacing: 0.7px;
}

.trade {
  flex: 1;
  margin-left: 24px;
  border: none;
  border-radius: 19px;
  background: #fcd535;
  color: #202630;
  font-family: inherit;
  font-size: 43px;
  font-weight: 500;
  letter-spacing: 1px;
}

.system-nav {
  display: flex;
  align-items: center;
  gap: 215px;
  height: 202px;
  padding-left: 319px;
}

.credit {
  position: absolute;
  right: 9px;
  top: 2668px;
  display: flex;
  align-items: center;
  gap: 5px;
  height: 36px;
  color: #d5d7da;
  font-family: "Noto Sans", sans-serif;
  font-size: 24px;
}
</style>
